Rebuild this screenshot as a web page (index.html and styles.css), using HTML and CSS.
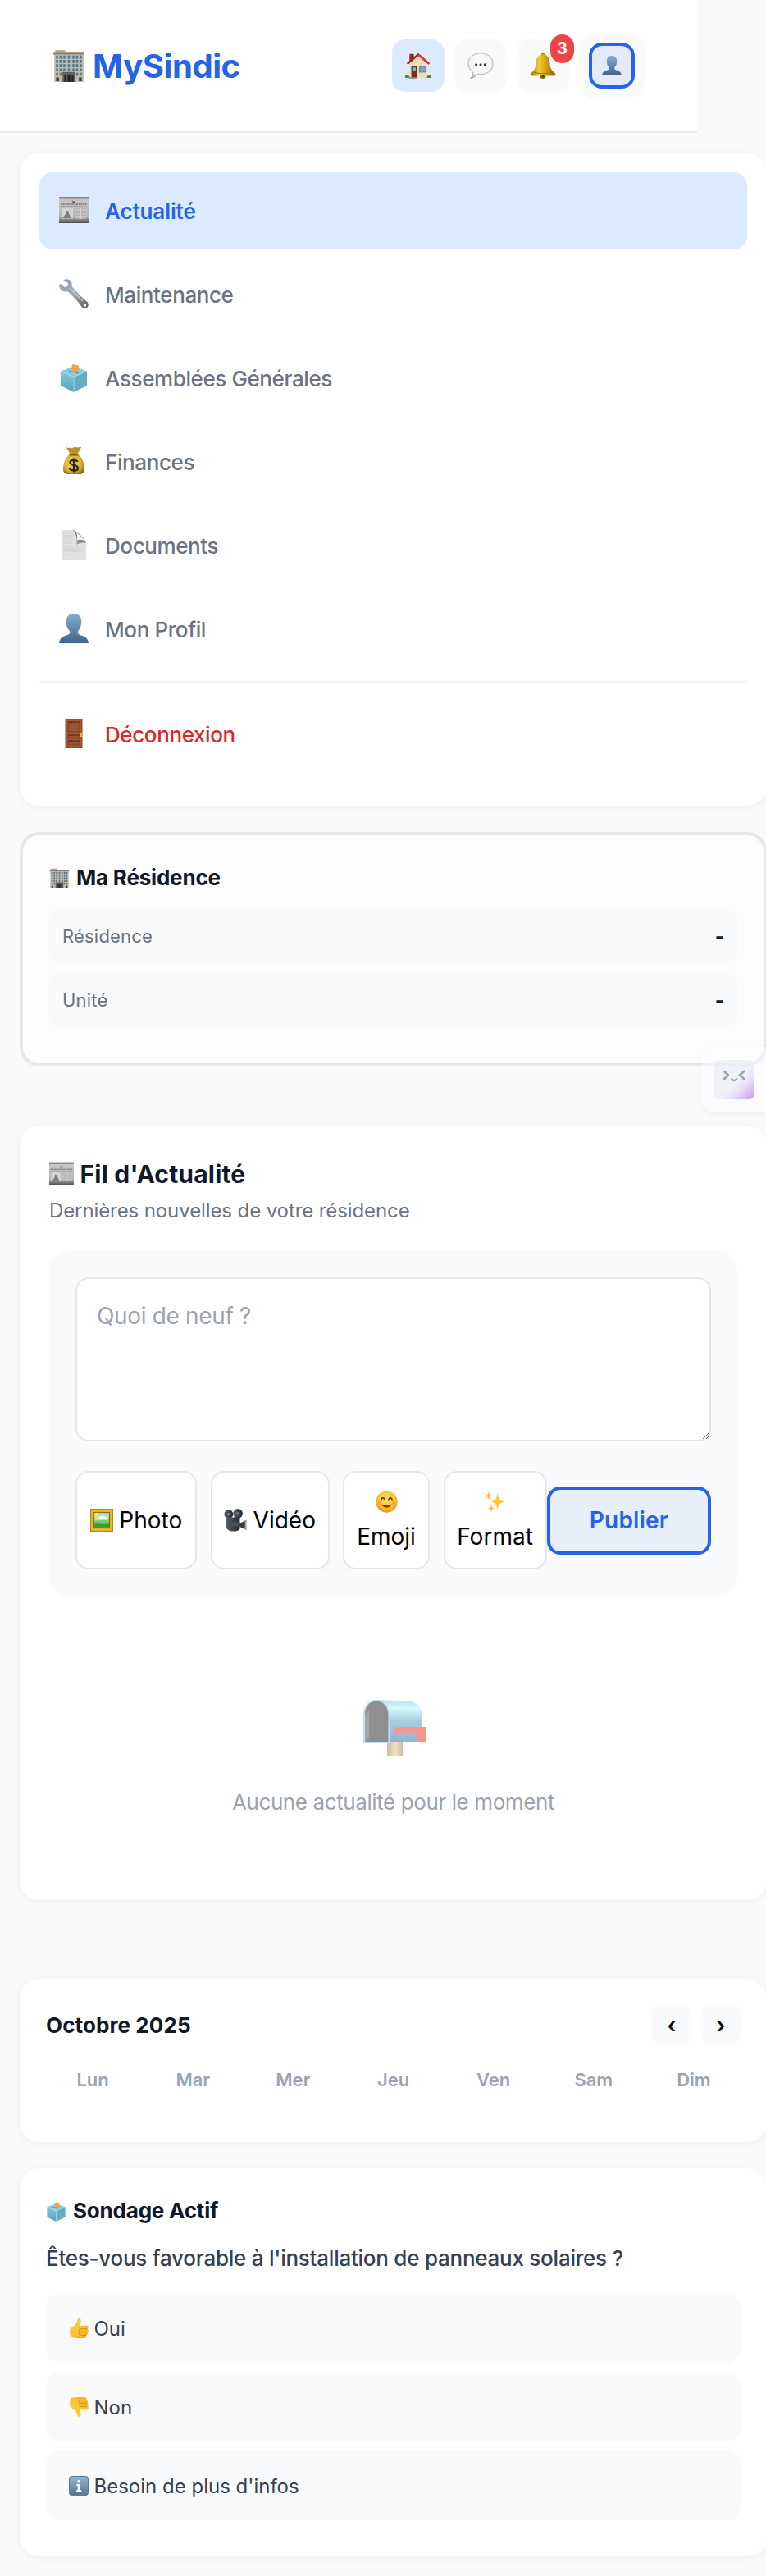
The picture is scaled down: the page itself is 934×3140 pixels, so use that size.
FILE: index.html
```
<!DOCTYPE html>
<html lang="fr">
<head>
<meta charset="utf-8">
<title>MySindic</title>
<link rel="stylesheet" href="styles.css">
</head>
<body>
<svg class="sprite" aria-hidden="true">
  <defs>
    <linearGradient id="gPerson" x1="0" y1="0" x2="0" y2="1"><stop offset="0" stop-color="#7fafd1"/><stop offset="1" stop-color="#42648a"/></linearGradient>
    <linearGradient id="gPaper" x1="0" y1="0" x2="0" y2="1"><stop offset="0" stop-color="#c9c9c9"/><stop offset=".75" stop-color="#b4b4b4"/><stop offset="1" stop-color="#4c4c4c"/></linearGradient>
    <linearGradient id="gGold" x1="0" y1="0" x2="1" y2="0"><stop offset="0" stop-color="#a8780a"/><stop offset=".35" stop-color="#f2cb35"/><stop offset=".6" stop-color="#d9a514"/><stop offset="1" stop-color="#8a6206"/></linearGradient>
    <radialGradient id="gBag" cx=".45" cy=".45" r=".6"><stop offset="0" stop-color="#f7dc5c"/><stop offset=".7" stop-color="#d8ad33"/><stop offset="1" stop-color="#96701c"/></radialGradient>
    <radialGradient id="gBubble" cx=".5" cy=".4" r=".6"><stop offset="0" stop-color="#fff"/><stop offset=".75" stop-color="#f4f4f4"/><stop offset="1" stop-color="#b5b5b5"/></radialGradient>
    <linearGradient id="gSteel" x1="0" y1="0" x2="1" y2="1"><stop offset="0" stop-color="#8fa3b5"/><stop offset=".5" stop-color="#a3a6ae"/><stop offset="1" stop-color="#62595c"/></linearGradient>
    <linearGradient id="gBoxL" x1="0" y1="0" x2="0" y2="1"><stop offset="0" stop-color="#80c9df"/><stop offset="1" stop-color="#5a9fbd"/></linearGradient>
    <radialGradient id="gFace" cx=".5" cy=".4" r=".6"><stop offset="0" stop-color="#ffe45c"/><stop offset=".7" stop-color="#fdbf2d"/><stop offset="1" stop-color="#f08a1c"/></radialGradient>
    <linearGradient id="gHand" x1="0" y1="0" x2="1" y2="1"><stop offset="0" stop-color="#ffd94f"/><stop offset="1" stop-color="#f5ad1d"/></linearGradient>
    <linearGradient id="gInfo" x1="0" y1="0" x2="0" y2="1"><stop offset="0" stop-color="#8fb6d6"/><stop offset=".5" stop-color="#7796b3"/><stop offset="1" stop-color="#5b7590"/></linearGradient>
    <linearGradient id="gMail" x1="0" y1="0" x2="0" y2="1"><stop offset="0" stop-color="#6dbfe6"/><stop offset=".2" stop-color="#b5f4ff"/><stop offset=".5" stop-color="#5a9fc4"/><stop offset="1" stop-color="#336f9c"/></linearGradient>
    <linearGradient id="gPost" x1="0" y1="0" x2="1" y2="0"><stop offset="0" stop-color="#9c8258"/><stop offset=".55" stop-color="#e2c48c"/><stop offset="1" stop-color="#9c8258"/></linearGradient>
    <linearGradient id="gCam" x1="0" y1="0" x2="1" y2="0"><stop offset="0" stop-color="#5a6068"/><stop offset="1" stop-color="#24282e"/></linearGradient>
    <linearGradient id="gFold" x1="1" y1="0" x2="0" y2="1"><stop offset="0" stop-color="#4a4a4a"/><stop offset="1" stop-color="#b5b5b5"/></linearGradient>
    <linearGradient id="gTile" x1="0" y1="0" x2="1" y2="1"><stop offset="0" stop-color="#e4e9f0" stop-opacity=".55"/><stop offset=".55" stop-color="#e8edf3" stop-opacity=".65"/><stop offset=".72" stop-color="#e8dcf4"/><stop offset="1" stop-color="#c69de8"/></linearGradient>
  </defs>
  <symbol id="building" viewBox="0 0 36 36">
    <path d="M3 1h11v2H3z" fill="#aaa69d"/>
    <path d="M1 3h34v3H1z" fill="#8d7c6c"/>
    <path d="M2 6h32v30H2z" fill="#c4b8a5"/>
    <path d="M5 7v23M9 7v23M13 7v19M18 7v19M23 7v19M27 7v23M31 7v23" stroke="#447896" stroke-width="2.3" stroke-dasharray="3.3 1.4"/>
    <path d="M11 25h14v11H11z" fill="#695c52"/>
    <path d="M13 28h2v8h-2zM16.5 28h3v8h-3zM21 28h2v8h-2z" fill="#16262f"/>
    <path d="M4 31h3v4H4zM29 31h3v4h-3z" fill="#233947"/>
  </symbol>
  <symbol id="house" viewBox="0 0 36 36">
    <path d="M6 2h6v10H6z" fill="#8d2a20"/>
    <path d="M6 15L18 4l12 11v20H6z" fill="#eedcb8"/>
    <path d="M18 .8L34 14.5l-2 2L18 4.800 4 16.500l-2-2z" fill="#b3211c"/>
    <path d="M18 3L32 15" stroke="#e54b3c" stroke-width="1.200"/>
    <path d="M8.500 19H16v16H8.500z" fill="#70341c"/>
    <path d="M10 20.500h4.500v5H10z" fill="#78bede"/>
    <path d="M19 18.500h10v9H19z" fill="#8b8170"/>
    <path d="M20.500 20h7v6h-7z" fill="#62aee0"/>
    <path d="M0 35c-1-5 4-6 6-2v2zM36 35c1-5-4-6-6-2v2z" fill="#4c8a2a"/>
    <path d="M6 34h11v2H5z" fill="#a4998c"/>
  </symbol>
  <symbol id="bubble" viewBox="0 0 36 36">
    <path d="M18 1C8 1 1 7 1 15.500c0 5 2.500 9 6.500 11.500C7.500 31 6 33.500 4 35.500c4-.5 8-2.500 10-6 1 .3 3 .5 4 .5 10 0 17-6 17-14.500S28 1 18 1z" fill="url(#gBubble)" stroke="#a5a5a5" stroke-width=".9"/>
    <circle cx="12" cy="16.500" r="1.700" fill="#333"/><circle cx="18" cy="16.500" r="1.700" fill="#333"/><circle cx="24" cy="16.500" r="1.700" fill="#333"/>
  </symbol>
  <symbol id="bell" viewBox="0 0 36 36">
    <circle cx="18" cy="3" r="2.500" fill="#a37910"/>
    <circle cx="18" cy="32" r="4" fill="#8a6206"/>
    <path d="M18 2.500c-6.500 0-9 5-9.500 12C8 23 5 25 1 29c-1 1.500 0 3 2 3h30c2 0 3-1.500 2-3-4-4-7-6-7.500-14.500-.5-7-3-12-9.500-12z" fill="url(#gGold)"/>
    <path d="M5 27c8 2.500 18 2.500 26 0" stroke="#8f690d" fill="none"/>
    <circle cx="18" cy="32.500" r="1.500" fill="#4e3706"/>
  </symbol>
  <symbol id="person" viewBox="0 0 36 36">
    <path d="M18 0c-6 0-9.300 4-9.300 10 0 4 1.300 8 3.800 10.500 1.200 1.600.8 4-1 4.900C7 27.500 1 27.500 0 36h36c-1-8.500-7-8.500-11.500-10.600-1.800-.9-2.200-3.300-1-4.900C26 18 27.300 14 27.300 10 27.300 4 24 0 18 0z" fill="url(#gPerson)"/>
  </symbol>
  <symbol id="newspaper" viewBox="0 0 36 36">
    <path d="M0 2h36v32H0z" fill="url(#gPaper)"/>
    <path d="M0 2h36v1.500H0z" fill="#858585"/>
    <path d="M15.500 6l2.500 2 2.500-2-1.500 3h-2z" fill="#444"/>
    <path d="M2 11h32" stroke="#858585" stroke-width="1.800" stroke-dasharray="2 .7"/>
    <path d="M2 13.500h32" stroke="#9a9a9a" stroke-width=".7"/>
    <path d="M3 15.500h14v13H3z" fill="#d4d4d4"/>
    <path d="M4.500 28l3.500-5 .5-4 3 .5 1 4 2.500 4.500z" fill="#7c7c7c"/>
    <path d="M19.500 15.500h14v13h-14z" fill="#c8c8c8"/>
    <path d="M20 17h13M20 19.500h13M20 22h13M20 24.500h13M20 27h13" stroke="#ababab" stroke-width=".9"/>
    <path d="M26.500 15v14" stroke="#d0d0d0"/>
  </symbol>
  <symbol id="wrench" viewBox="0 0 36 36">
    <path d="M5 1.500c3-2 7-1.500 9 1 2 2.200 2 4.500 1.500 6.800 5 5.500 11 12.200 18 18 2.500 2 3 5 1.300 7-1.900 2.200-5.300 2-7.300-.6C23 27 17 21 10.500 15.200 6 16.500.5 14 0 7.500l2-1.500 4.500 4 3.800-1L11 5z" fill="url(#gSteel)"/>
    <circle cx="31.500" cy="32" r="1.800" fill="#fff"/>
    <path d="M13 11l16 16" stroke="#cdd2d8" stroke-width="1.300"/>
  </symbol>
  <symbol id="ballot" viewBox="0 0 36 36">
    <path d="M2 10.500l16-6 16 6-16 7z" fill="#86cde1"/>
    <path d="M2 10.500l16 7V36L2 28z" fill="url(#gBoxL)"/>
    <path d="M34 10.500l-16 7V36l16-8z" fill="#67acc6"/>
    <path d="M2 10.500l16 7 16-7M18 17.500V36" stroke="#a5e0ee" stroke-width=".8" fill="none"/>
    <path d="M16 2l8 1.500-1 9-8-1.500z" fill="#efa346"/>
    <path d="M12 10.500l12 2.500" stroke="#49879f"/>
  </symbol>
  <symbol id="moneybag" viewBox="0 0 36 36">
    <path d="M9 1c2 2 4 0 6 1s3-2 5-1 4 0 7 0c-1 4-4 6-5 10h-8c-1-4-4-6-5-10z" fill="#b8922f"/>
    <path d="M13 10h10c4 3 8 9 8 17 0 5-2 7-6 7H11c-4 0-6-2-6-7 0-8 4-14 8-17z" fill="url(#gBag)"/>
    <path d="M12.500 10.500h11" stroke="#80601c" stroke-width="2"/>
    <path d="M22.500 19c-1-3-9-3-9 .8 0 4 9.500 2.200 9.500 6.600 0 4.200-9.500 4.200-10.300 0M18 14.500v17" stroke="#2b2618" stroke-width="2.300" fill="none"/>
  </symbol>
  <symbol id="document" viewBox="0 0 36 36">
    <path d="M3 0h15l15 14v22H3z" fill="#e0e0e0"/>
    <path d="M16 0c5 3 6 9 5.500 18 3.500-2 8-3 11.500-2.500C31 10 23 2 16 0z" fill="url(#gFold)"/>
    <path d="M20 1l13 13c-3.500-2-7-2.500-11-1.500.5-4.500 0-8.500-2-11.500z" fill="#f1f1f1"/>
    <path d="M5 3h6M5 7h11M5 10h12M5 13h12M5 16h12M5 20h23M5 23h23M5 26h22M5 30h7" stroke="#cbcbcb" stroke-width=".9"/>
  </symbol>
  <symbol id="door" viewBox="0 0 36 36">
    <path d="M7.500 0h21v36h-21z" fill="#8d4a2b"/>
    <path d="M9 1.500h18V35H9z" fill="#a65b38"/>
    <path d="M11 4h14v12H11zM11 20h14v4H11zM11 27h14v5H11z" fill="#9c5230" stroke="#773b20" stroke-width=".8"/>
    <path d="M11 4h14M11 20h14M11 27h14" stroke="#6b351b" stroke-width="1.400"/>
    <path d="M25.500 17h3v5h-3z" fill="#e0b930"/>
  </symbol>
  <symbol id="frame" viewBox="0 0 36 36">
    <path d="M0 0h36v36H0z" fill="#bd860c"/>
    <path d="M1.500 1.500h33v33h-33z" fill="#ebbb26"/>
    <path d="M5 5h26v26H5z" fill="#8c650c"/>
    <path d="M6.500 6.500h23v23h-23z" fill="#94e0f4"/>
    <circle cx="10" cy="10" r="4" fill="#fbe04a"/>
    <path d="M14 13c3-3 7-3 10 0 2 0 4 1 4 3H13z" fill="#f6fcfe"/>
    <path d="M6.500 19c8-2 15 1 23-2v12.500h-23z" fill="#76ca50"/>
    <path d="M6.500 24c6-2 12 2 23-1v6.500h-23z" fill="#3f9c34"/>
  </symbol>
  <symbol id="camera" viewBox="0 0 36 36">
    <circle cx="7.500" cy="8.500" r="7" fill="url(#gCam)"/><circle cx="22" cy="7.500" r="7.500" fill="url(#gCam)"/>
    <circle cx="22" cy="7.500" r="2.500" fill="#787e85"/><circle cx="7.500" cy="8.500" r="2.300" fill="#787e85"/>
    <path d="M3 14l22-1v19c-3 3-8 4-15 3C6 33 3 31 3 27z" fill="url(#gCam)"/>
    <path d="M24 23l11-5v15l-11-5z" fill="#363b42"/>
    <path d="M12 21h11v7H12z" fill="#4a5058"/>
    <path d="M34 19v13" stroke="#a3a8ad" stroke-width="2"/>
  </symbol>
  <symbol id="smile" viewBox="0 0 36 36">
    <circle cx="18" cy="18" r="17.500" fill="url(#gFace)"/>
    <path d="M9 15.500c1-5 5-5 6 0M21 15.500c1-5 5-5 6 0" stroke="#6a3809" stroke-width="2.200" fill="none" stroke-linecap="round"/>
    <path d="M9 22c4 7.500 14 7.500 18 0-5 2-13 2-18 0z" fill="#7c4108"/>
    <circle cx="6.500" cy="20" r="3" fill="#f57c3a" opacity=".45"/><circle cx="29.500" cy="20" r="3" fill="#f57c3a" opacity=".45"/>
  </symbol>
  <symbol id="sparkles" viewBox="0 0 36 36">
    <path d="M22 2c1 11 3 14 13 16-10 2-12 5-13 16-1-11-3-14-11-16 8-2 10-5 11-16z" fill="#fdc93c"/>
    <path d="M8 0c.6 6 2 7.500 7 8.500-5 1-6.400 2.500-7 8.500-.6-6-2-7.500-7-8.500C6 7.500 7.400 6 8 0zM12 22c.6 5 2 6.500 6 7-4 .8-5.400 2-6 7-.6-5-2-6.200-6-7 4-.5 5.400-2 6-7z" fill="#fbbd4a"/>
  </symbol>
  <symbol id="mailbox" viewBox="0 0 80 80">
    <path d="M32 52h19v23H32z" fill="url(#gPost)"/>
    <path d="M19 6l39 2c11 1 17 8 17 18v33H34z" transform="scale(1 .98)" fill="url(#gMail)"/>
    <path d="M3 59V24C3 13 10 6 19 6s16 7 16 19v34z" fill="#86c4e6"/>
    <path d="M5 57V24C5 14 11 7.500 19 7.500S33.500 14 33.500 25v32z" fill="#2b2a2a"/>
    <path d="M5 57V24l5-5v33z" fill="#555"/>
    <path d="M45 39h34v18.500H67.500V47H44.500c-5-1-4.500-8 .5-8z" fill="#f53628"/>
  </symbol>
  <symbol id="thumb" viewBox="0 0 36 36">
    <path d="M3 17c7-2 11-7 13-15 1-3 6-3 6 2 0 4-1 7-2 9h12c5 0 5 5 2 6 3 2 2 5-.5 6 2 2 1 5-1.500 5.500C33 34 31 36 28 36H14c-5 0-9-1-11-3C1 28 1 21 3 17z" fill="url(#gHand)"/>
    <path d="M33 19H21c-3 1-3 5 0 6h12M32 30.500H21c-3-1-3-4 0-5.500" stroke="#cd850f" stroke-width="1.300" fill="none"/>
  </symbol>
  <symbol id="info" viewBox="0 0 36 36">
    <rect width="36" height="36" rx="6" fill="#5c7893"/>
    <rect x="1.500" y="1.500" width="33" height="33" rx="5" fill="url(#gInfo)"/>
    <circle cx="18" cy="10" r="2.600" fill="#fff"/>
    <path d="M14 15h6v11h3v2.500H13.500V26H16v-8.500h-2z" fill="#fff"/>
  </symbol>
</svg>

<header class="header">
  <div class="logo"><svg class="logo-icon"><use href="#building"/></svg><span>MySindic</span></div>
  <nav class="header-nav">
    <a class="hbtn active"><svg><use href="#house"/></svg></a>
    <a class="hbtn"><svg><use href="#bubble"/></svg></a>
    <a class="hbtn"><svg><use href="#bell"/></svg><span class="badge">3</span></a>
    <a class="profile"><span class="avatar"><svg><use href="#person"/></svg></span></a>
  </nav>
</header>

<main class="main">
  <nav class="card menu">
    <a class="menu-item active"><svg><use href="#newspaper"/></svg><span>Actualité</span></a>
    <a class="menu-item"><svg><use href="#wrench"/></svg><span>Maintenance</span></a>
    <a class="menu-item"><svg><use href="#ballot"/></svg><span>Assemblées Générales</span></a>
    <a class="menu-item"><svg><use href="#moneybag"/></svg><span>Finances</span></a>
    <a class="menu-item"><svg><use href="#document"/></svg><span>Documents</span></a>
    <a class="menu-item"><svg><use href="#person"/></svg><span>Mon Profil</span></a>
    <hr class="divider">
    <a class="menu-item logout"><svg><use href="#door"/></svg><span>Déconnexion</span></a>
  </nav>

  <section class="residence">
    <h3 class="title"><svg><use href="#building"/></svg><span>Ma Résidence</span></h3>
    <div class="info-row"><span>Résidence</span><b>-</b></div>
    <div class="info-row"><span>Unité</span><b>-</b></div>
    <div class="assistant">
      <svg viewBox="0 0 48 48">
        <rect width="48" height="48" rx="5" fill="url(#gTile)"/>
        <path d="M12 14l5 4.500-5 4.500M36 14l-5 4.500 5 4.500" fill="none" stroke="#a3a3ad" stroke-width="3" stroke-linecap="round" stroke-linejoin="round"/>
        <path d="M21.500 23.500c1 2.200 4.500 2.200 5.500 0" fill="none" stroke="#a3a3ad" stroke-width="2.800" stroke-linecap="round"/>
      </svg>
    </div>
  </section>

  <section class="card feed">
    <h2 class="feed-title"><svg><use href="#newspaper"/></svg><span>Fil d'Actualité</span></h2>
    <p class="feed-sub">Dernières nouvelles de votre résidence</p>
    <div class="composer">
      <textarea class="composer-input" placeholder="Quoi de neuf ?"></textarea>
      <div class="composer-actions">
        <button class="tool photo"><svg><use href="#frame"/></svg><span>Photo</span></button>
        <button class="tool video"><svg><use href="#camera"/></svg><span>Vidéo</span></button>
        <button class="tool stacked emoji"><svg><use href="#smile"/></svg><span>Emoji</span></button>
        <button class="tool stacked format"><svg><use href="#sparkles"/></svg><span>Format</span></button>
        <button class="publish">Publier</button>
      </div>
    </div>
    <div class="empty">
      <svg><use href="#mailbox"/></svg>
      <p>Aucune actualité pour le moment</p>
    </div>
  </section>

  <section class="card calendar">
    <div class="calendar-head">
      <h3 class="month">Octobre 2025</h3>
      <div class="arrows"><button class="arrow">‹</button><button class="arrow">›</button></div>
    </div>
    <div class="days"><span>Lun</span><span>Mar</span><span>Mer</span><span>Jeu</span><span>Ven</span><span>Sam</span><span>Dim</span></div>
  </section>

  <section class="card poll">
    <h3 class="title"><svg><use href="#ballot"/></svg><span>Sondage Actif</span></h3>
    <p class="question">Êtes-vous favorable à l'installation de panneaux solaires ?</p>
    <div class="options">
      <div class="option"><svg><use href="#thumb"/></svg><span>Oui</span></div>
      <div class="option"><svg class="down"><use href="#thumb"/></svg><span>Non</span></div>
      <div class="option"><svg><use href="#info"/></svg><span>Besoin de plus d'infos</span></div>
    </div>
  </section>
</main>
</body>
</html>
```
FILE: styles.css
```
* { box-sizing: border-box; margin: 0; padding: 0; }
body {
  width: 934px;
  height: 3140px;
  overflow: hidden;
  background: #f9fafc;
  color: #111827;
  font-family: Inter, "Liberation Sans", sans-serif;
}
svg { display: block; flex: none; }
button { font: inherit; }
.sprite { position: absolute; width: 0; height: 0; }

/* Header */
.header {
  display: flex;
  align-items: center;
  justify-content: space-between;
  width: 850px;
  height: 162px;
  padding: 0 64px;
  background: #fff;
  border-bottom: 2px solid #e5e7eb;
}
.logo {
  display: flex;
  align-items: center;
  gap: 9px;
  color: #2563eb;
  font-size: 40px;
  font-weight: 700;
  line-height: 48px;
  letter-spacing: -0.45px;
}
.logo span { padding-top: 2px; }
.logo-icon { width: 40px; height: 40px; }
.header-nav { display: flex; align-items: center; gap: 12px; }
.hbtn {
  position: relative;
  display: flex;
  align-items: center;
  justify-content: center;
  width: 64px;
  height: 64px;
  border-radius: 16px;
  background: #f9fafc;
}
.hbtn.active { background: #dbeafe; }
.hbtn svg { width: 32px; height: 32px; }
.badge {
  position: absolute;
  top: -6px;
  right: -6px;
  width: 29px;
  height: 35px;
  border-radius: 15px;
  background: #ef4444;
  color: #fff;
  font-size: 20px;
  font-weight: 700;
  line-height: 34px;
  text-align: center;
}
.profile {
  display: flex;
  align-items: center;
  justify-content: center;
  width: 80px;
  height: 80px;
  border-radius: 20px;
  background: #f9fafc;
}
.avatar {
  display: flex;
  align-items: center;
  justify-content: center;
  width: 56px;
  height: 56px;
  border: 4px solid #2563eb;
  border-radius: 16px;
  background: #e4eaf8;
}
.avatar svg { width: 24px; height: 24px; }

/* Cards */
.main { width: 935px; padding: 24px 0 24px 24px; }
.card {
  border-radius: 24px;
  background: #fff;
  box-shadow: 0 2px 10px rgba(0, 0, 0, 0.05);
}
.title {
  display: flex;
  align-items: center;
  gap: 8px;
  font-size: 26px;
  font-weight: 700;
  line-height: 40px;
  letter-spacing: -0.2px;
}
.title svg { width: 25px; height: 25px; }

/* Menu */
.menu { height: 796px; padding: 24px; }
.menu-item {
  display: flex;
  align-items: center;
  gap: 20px;
  height: 94px;
  margin-bottom: 8px;
  padding: 0 24px;
  border-radius: 16px;
  color: #6b7280;
  font-size: 26px;
  font-weight: 500;
  letter-spacing: -0.4px;
}
.menu-item svg { width: 36px; height: 36px; margin-bottom: 2px; }
.menu-item span { padding-top: 1px; }
.menu-item.active {
  background: #dbeafe;
  color: #2563eb;
  font-weight: 600;
  letter-spacing: -0.1px;
}
.menu-item.logout { color: #dc2626; letter-spacing: -0.4px; }
.divider { height: 2px; margin: 16px 0; border: 0; background: #f3f4f6; }

/* Residence */
.residence {
  position: relative;
  height: 286px;
  margin-top: 32px;
  padding: 32px;
  border: 4px solid #e5e7eb;
  border-radius: 24px;
  background: #fdfdfd;
}
.residence .title { margin-bottom: 18px; }
.info-row {
  display: flex;
  align-items: center;
  justify-content: space-between;
  height: 66px;
  margin-bottom: 12px;
  padding: 0 16px;
  border-radius: 12px;
  background: #f9fafc;
  color: #6b7280;
  font-size: 22px;
  letter-spacing: 0.2px;
}
.info-row b { color: #111827; font-size: 24px; font-weight: 700; letter-spacing: 0; }
.assistant {
  position: absolute;
  top: 258px;
  right: -8px;
  width: 84px;
  height: 80px;
  padding: 16px;
  border-radius: 14px 0 0 14px;
  background: rgba(252, 253, 254, 0.45);
  box-shadow: 0 2px 8px rgba(0, 0, 0, 0.05);
}
.assistant svg { width: 48px; height: 48px; }

/* Feed */
.feed { height: 944px; margin-top: 72px; padding: 36px; }
.feed-title {
  display: flex;
  align-items: center;
  gap: 7.5px;
  font-size: 30px;
  font-weight: 700;
  line-height: 46px;
  letter-spacing: 0.2px;
}
.feed-title svg { width: 30px; height: 30px; }
.feed-sub {
  padding-top: 1px;
  color: #6b7280;
  font-size: 24px;
  line-height: 42px;
  letter-spacing: -0.1px;
}
.composer {
  height: 420px;
  margin-top: 28px;
  padding: 32px;
  border-radius: 24px;
  background: #f9fafc;
}
.composer-input {
  display: block;
  width: 100%;
  height: 200px;
  padding: 24px;
  border: 2px solid #e5e7eb;
  border-radius: 16px;
  outline: 0;
  background: #fff;
  font: 28px/42px Inter, "Liberation Sans", sans-serif;
  letter-spacing: -0.34px;
  resize: vertical;
}
.composer-input::placeholder { color: #9ca3af; }
.composer-actions { display: flex; align-items: center; margin-top: 36px; }
.tool {
  display: flex;
  align-items: center;
  justify-content: center;
  gap: 7.5px;
  height: 120px;
  margin-right: 16.5px;
  border: 2px solid #e5e7eb;
  border-radius: 16px;
  background: #fff;
  color: #000;
  font-size: 28px;
  line-height: 42px;
}
.tool svg { width: 28px; height: 28px; }
.photo { width: 148px; }
.video { width: 145px; }
.emoji { width: 106px; }
.format { width: 126px; margin-right: 0.5px; }
.stacked { flex-direction: column; gap: 8px; }
.stacked svg { margin-top: 5px; width: 27px; height: 27px; }
.publish {
  flex: 1;
  height: 83px;
  border: 4px solid #2563eb;
  border-radius: 16px;
  background: #e8eefa;
  color: #2563eb;
  font-size: 28px;
  font-weight: 600;
  letter-spacing: 0.18px;
}
.empty {
  display: flex;
  flex-direction: column;
  align-items: center;
  gap: 31px;
  padding-top: 121px;
  color: #9ca3af;
  font-size: 26px;
  line-height: 40px;
  letter-spacing: -0.4px;
}
.empty svg { width: 80px; height: 80px; opacity: 0.52; }

/* Calendar */
.calendar { height: 199px; margin-top: 96px; padding: 32px; }
.calendar-head { display: flex; align-items: center; justify-content: space-between; }
.month { font-size: 26px; font-weight: 700; letter-spacing: 0.1px; }
.arrows { display: flex; gap: 12px; }
.arrow {
  width: 48px;
  height: 48px;
  border: 0;
  border-radius: 12px;
  background: #f9fafc;
  color: #000;
  font-size: 26px;
  font-weight: 600;
}
.days {
  display: grid;
  grid-template-columns: repeat(7, 1fr);
  gap: 8px;
  margin-top: 24px;
  color: #9ca3af;
  font-size: 22px;
  font-weight: 600;
  line-height: 38px;
  text-align: center;
}

/* Poll */
.poll { height: 473px; margin-top: 32px; padding: 32px; }
.question {
  margin-top: 17px;
  color: #374151;
  font-size: 26px;
  font-weight: 500;
  line-height: 42px;
  letter-spacing: -0.25px;
}
.options { display: flex; flex-direction: column; gap: 12px; margin-top: 22px; }
.option {
  display: flex;
  align-items: center;
  gap: 6.5px;
  height: 84px;
  padding: 0 28px;
  border-radius: 16px;
  background: #f9fafc;
  color: #374151;
  font-size: 24px;
}
.option svg { width: 24px; height: 24px; }
.option .down { transform: scaleY(-1); }
```
